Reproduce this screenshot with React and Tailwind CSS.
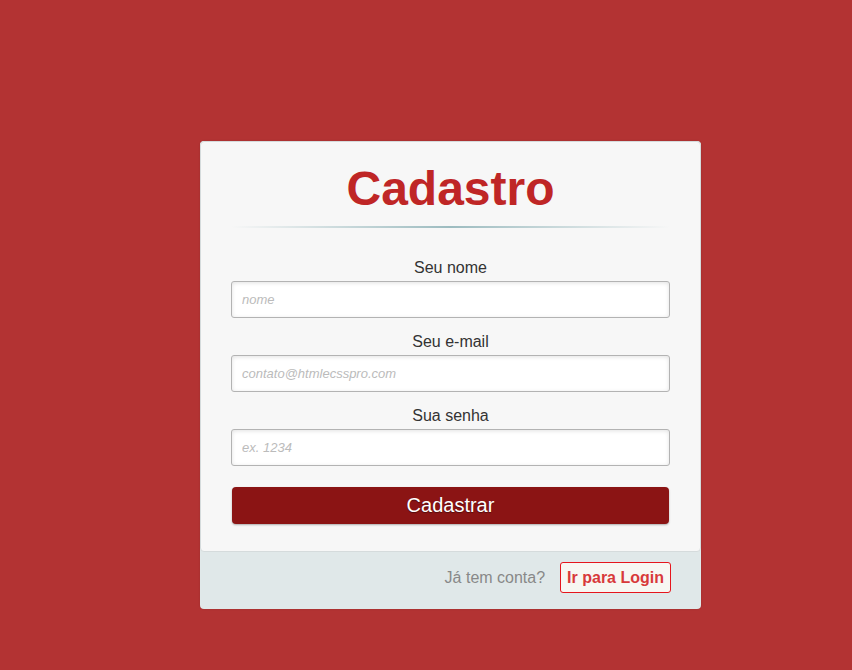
import React from 'react';

const Field = ({ label, placeholder, type = 'text', first }) => (
    <div className={first ? 'mt-[31px]' : 'mt-[15px]'}>
        <label className="block text-center text-[16px] leading-[18px] text-[#333]">{label}</label>
        <input
            type={type}
            placeholder={placeholder}
            className="mt-[4px] block w-full h-[37px] px-[10px] border border-[#b3b3b3] rounded-[3px] bg-white text-[13px] italic outline-none shadow-[inset_0_1px_4px_rgba(0,0,0,0.12)] placeholder:text-[#bbb] placeholder:italic"
        />
    </div>
);

const App = () => {
    return (
        <div className="min-h-screen w-full bg-[#b33333] pt-[141px] pl-[200px]" style={{ fontFamily: '"Liberation Sans", Arial, sans-serif' }}>
            <div className="w-[501px] rounded-[4px] bg-[#e0e8e9] shadow-[0_0_2px_rgba(0,0,0,0.15)]">
                {/* Form */}
                <div className="rounded-[4px] border border-[#d5dbdc] bg-[#f7f7f7] px-[30px] pt-[19px] pb-[27px]">
                    <h1 className="text-center text-[48px] leading-[56px] font-bold text-[#bf2626]">Cadastro</h1>
                    <div className="mt-[9px] h-[2px] bg-[linear-gradient(to_right,transparent,#9dbcc0_50%,transparent)]" />

                    <Field first label="Seu nome" placeholder="nome" />
                    <Field label="Seu e-mail" placeholder="contato@htmlecsspro.com" type="email" />
                    <Field label="Sua senha" placeholder="ex. 1234" type="password" />

                    <button className="mt-[21px] block w-[437px] mx-auto h-[37px] rounded-[4px] bg-[#8b1414] text-white text-[20px] leading-[35px] shadow-[0_1px_2px_rgba(0,0,0,0.3)] [text-shadow:0_1px_1px_rgba(0,0,0,0.4)]">
                        Cadastrar
                    </button>
                </div>

                {/* Footer */}
                <div className="flex items-center justify-end pt-[10px] pb-[16px] pr-[30px] gap-[15px]">
                    <span className="text-[16px] text-[#888]">Já tem conta?</span>
                    <button className="h-[31px] px-[6px] rounded-[3px] border border-[#e5161d] bg-[#f7f7f2] text-[16px] font-bold text-[#d83a3a]">
                        Ir para Login
                    </button>
                </div>
            </div>
        </div>
    );
};

export default App;
